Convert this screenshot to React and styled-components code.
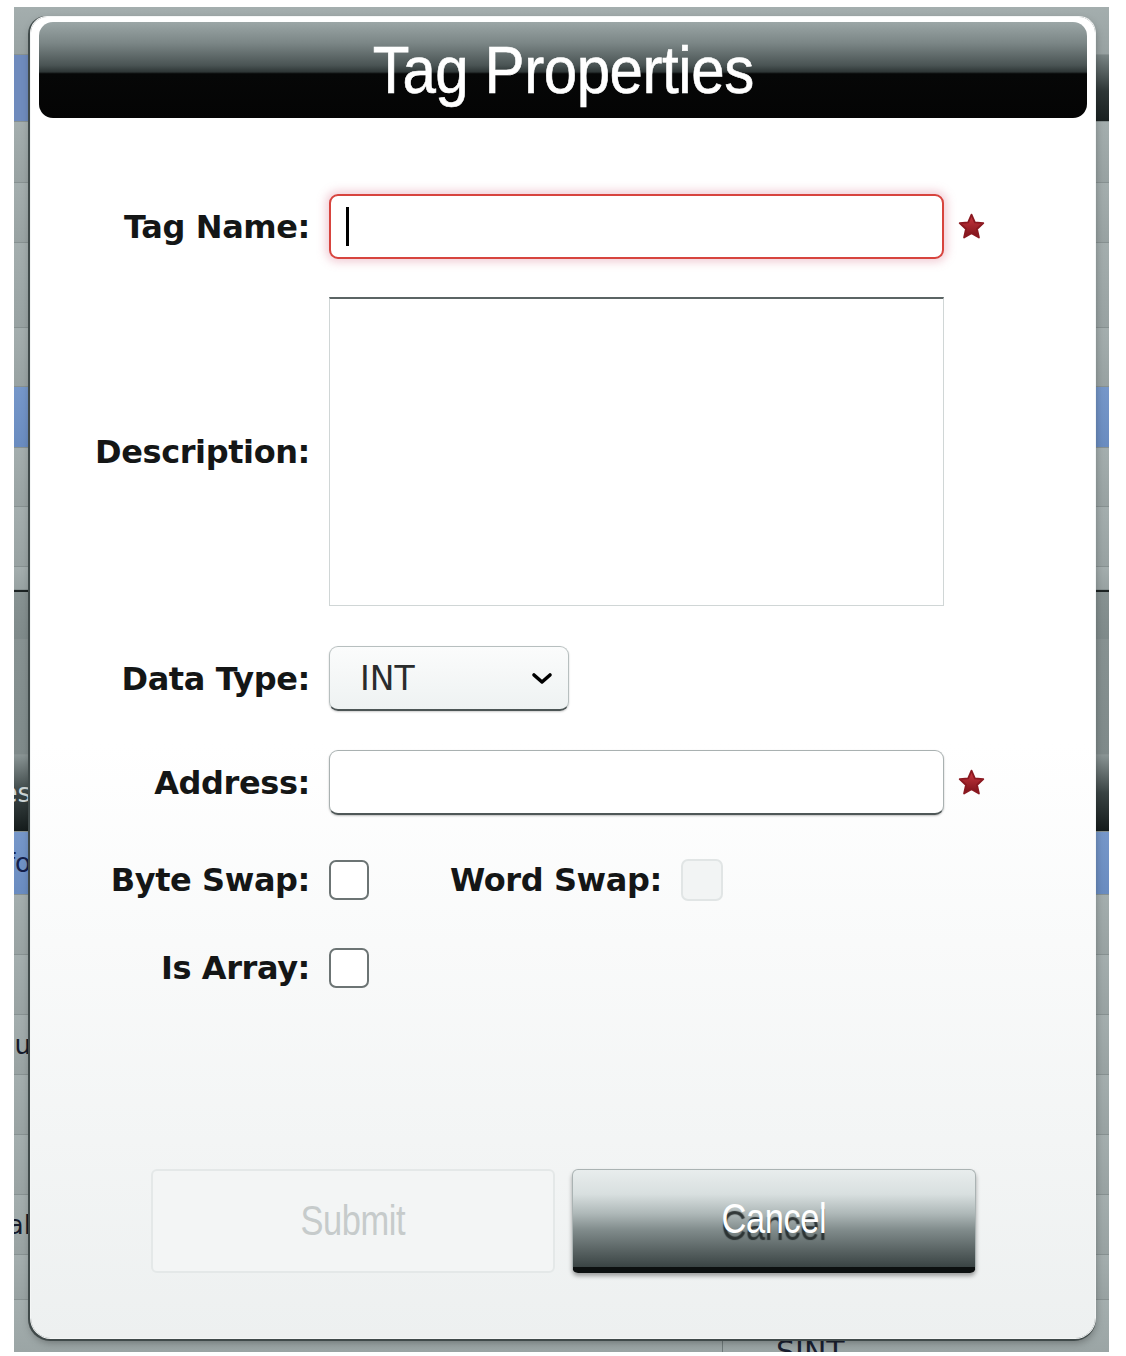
import React from 'react';
import styled, { createGlobalStyle } from 'styled-components';

const GlobalStyle = createGlobalStyle`
  html, body {
    margin: 0;
    padding: 0;
    background: #ffffff;
  }
  body {
    font-family: "DejaVu Sans", Verdana, sans-serif;
  }
`;

const tones = {
	plain: 'linear-gradient(#a4aeae, #98a2a2)',
	top: 'linear-gradient(90deg, #6f8bbd 0 50%, transparent 50%), linear-gradient(#7a8585, #2e3737 55%, #1a2121)',
	blue: 'linear-gradient(#7697c9, #6a8cc0)',
	dark: 'linear-gradient(#879292, #7f8a8a)',
	head: 'linear-gradient(#8a9595, #3a4444 50%, #151c1c)',
};

const Page = styled.div`
	width: 1126px;
	height: 1356px;
	padding: 7px 17px 4px 14px;
	box-sizing: border-box;
`;

const Backdrop = styled.div`
	position: relative;
	height: 100%;
	overflow: hidden;
	background: #98a2a2;
	display: flex;
	flex-direction: column;
`;

const BgRow = styled.div`
	flex: 0 0 ${(p) => p.$h}px;
	box-sizing: border-box;
	display: flex;
	align-items: center;
	background: ${(p) => tones[p.$tone || 'plain']};
	border-bottom: 1px solid #879191;
	border-top: ${(p) => (p.$rule ? '2px solid #1c2323' : 'none')};
`;

const BgLeft = styled.div`
	width: 17px;
	flex: none;
	overflow: hidden;
	display: flex;
	justify-content: flex-end;
	white-space: nowrap;
	font-size: 26px;
	color: ${(p) => p.$color || '#151a2a'};
`;

const BgCol = styled.div`
	margin-left: 691px;
	align-self: stretch;
	border-left: 1px solid #6f7a7a;
	padding: 34px 0 0 53px;
	font-size: 30px;
	color: #1a2030;
	white-space: nowrap;
`;

const Dialog = styled.div`
	position: absolute;
	left: 17px;
	top: 10px;
	width: 1064px;
	height: 1321px;
	box-sizing: border-box;
	padding: 5px 8px 0;
	background: linear-gradient(#ffffff 0%, #ffffff 55%, #edf0f0 100%);
	border-radius: 16px 16px 20px 20px;
	box-shadow: 0 0 0 1px #f4f6f6, -1px 1px 0 2px #404a4a, 0 4px 8px rgba(0, 0, 0, 0.35);
	display: flex;
	flex-direction: column;
`;

const Header = styled.div`
	height: 96px;
	flex: none;
	border-radius: 14px;
	background: linear-gradient(
		#9ba6a6 0%,
		#7b8686 22%,
		#4a5454 45%,
		#2e3636 52%,
		#060707 54%,
		#040404 100%
	);
	display: flex;
	justify-content: center;
	overflow: hidden;
`;

const Title = styled.h1`
	margin: 0;
	font: 400 66px/96px "Liberation Sans", Arial, sans-serif;
	color: #ffffff;
	transform: scaleX(0.91);
	letter-spacing: -0.5px;
	-webkit-text-stroke: 0.6px #ffffff;
`;

const Form = styled.div`
	display: flex;
	flex-direction: column;
	margin-top: 76px;
`;

const Row = styled.div`
	display: flex;
	align-items: center;
	height: ${(p) => p.$h}px;
	margin-top: ${(p) => p.$mt || 0}px;
`;

const Label = styled.label`
	width: 271px;
	flex: none;
	margin-right: 19px;
	text-align: right;
	font-size: 32px;
	font-weight: 700;
	color: #141616;
	letter-spacing: -0.4px;
	white-space: nowrap;
`;

const InlineLabel = styled(Label)`
	width: auto;
	margin-left: 81px;
`;

const FieldBox = styled.div`
	position: relative;
	display: flex;
`;

const Caret = styled.span`
	position: absolute;
	left: 17px;
	top: 13px;
	width: 3px;
	height: 39px;
	background: #000000;
	pointer-events: none;
`;

const TextInput = styled.input`
	width: 615px;
	height: 65px;
	box-sizing: border-box;
	padding: 0 15px;
	font-family: "DejaVu Sans", sans-serif;
	font-size: 33px;
	color: #111;
	caret-color: transparent;
	background: #ffffff;
	outline: none;
	border-radius: 9px;
	border: ${(p) => (p.$invalid ? '2px solid #d7443e' : '1px solid #a9b1b1')};
	border-bottom: ${(p) => (p.$invalid ? '2px solid #d7443e' : '2px solid #4f5858')};
	box-shadow: ${(p) =>
		p.$invalid
			? '0 0 10px 3px rgba(214, 110, 135, 0.35)'
			: '0 1px 2px rgba(0, 0, 0, 0.25)'};
`;

const TextArea = styled.textarea`
	width: 615px;
	height: 309px;
	box-sizing: border-box;
	resize: none;
	outline: none;
	border: 1px solid #d0d6d6;
	border-top: 2px solid #5b6464;
	background: #ffffff;
	font-family: "DejaVu Sans", sans-serif;
	font-size: 30px;
`;

const SelectBox = styled.div`
	position: relative;
	width: 240px;
	height: 65px;
`;

const Select = styled.select`
	appearance: none;
	width: 100%;
	height: 100%;
	box-sizing: border-box;
	padding: 0 0 0 30px;
	font-family: "DejaVu Sans", sans-serif;
	font-size: 33px;
	color: #2a2c2c;
	border: 1px solid #b7bfbf;
	border-bottom: 2px solid #4c5555;
	border-radius: 9px;
	background: linear-gradient(#fbfcfc, #eef2f2);
	box-shadow: 0 1px 2px rgba(0, 0, 0, 0.2);
	outline: none;
`;

const Chevron = styled.svg`
	position: absolute;
	right: 16px;
	top: 25px;
	pointer-events: none;
`;

const Star = styled.svg`
	margin-left: 14px;
	flex: none;
`;

const Check = styled.input.attrs({ type: 'checkbox' })`
	appearance: none;
	margin: 0;
	flex: none;
	width: ${(p) => (p.disabled ? 42 : 40)}px;
	height: ${(p) => (p.disabled ? 42 : 40)}px;
	box-sizing: border-box;
	border-radius: 7px;
	border: 2px solid ${(p) => (p.disabled ? '#e1e5e5' : '#6c7474')};
	background: ${(p) => (p.disabled ? '#f2f4f4' : '#ffffff')};
`;

const ButtonRow = styled.div`
	margin-top: auto;
	margin-bottom: 65px;
	display: flex;
	justify-content: center;
	gap: 17px;
`;

const Button = styled.button`
	width: 404px;
	height: 104px;
	box-sizing: border-box;
	border-radius: 6px;
	font-family: "Liberation Sans", Arial, sans-serif;
	font-size: 42px;
	padding: 0;
	${(p) =>
		p.$primary
			? `
		border: 1px solid #aab3b3;
		border-bottom: 6px solid #0c1010;
		color: #ffffff;
		text-shadow: 0 7px 1px rgba(35, 42, 42, 0.9);
		background: linear-gradient(#e8eded 0%, #d8dfdf 25%, #aeb8b8 45%, #808b8b 62%, #555f5f 85%, #3a4444 100%);
		box-shadow: 0 3px 4px rgba(0, 0, 0, 0.35);
	`
			: `
		border: 2px solid #e4e8e8;
		color: #c6cbcb;
		background: #f3f5f5;
	`}
`;

const ButtonText = styled.span`
	display: inline-block;
	transform: scaleX(0.82);
	letter-spacing: -0.5px;
`;

const bgRows = [
	{ h: 48 },
	{ h: 67, tone: 'top' },
	{ h: 61 },
	{ h: 60 },
	{ h: 85 },
	{ h: 59 },
	{ h: 61, tone: 'blue' },
	{ h: 59 },
	{ h: 60 },
	{ h: 23 },
	{ h: 50, tone: 'dark', rule: true },
	{ h: 115, tone: 'dark' },
	{ h: 77, tone: 'head', left: 'Types', color: '#cfd6d6' },
	{ h: 63, tone: 'blue', left: 'Info', color: '#14204a' },
	{ h: 60 },
	{ h: 60 },
	{ h: 60, left: 'Menu' },
	{ h: 60 },
	{ h: 60 },
	{ h: 60, left: 'Normal' },
	{ h: 45 },
	{ h: 70, col: 'SINT' },
];

const RequiredStar = () => (
	<Star width='27' height='27' viewBox='0 0 24 24'>
		<defs>
			<linearGradient id='starFill' x1='0' y1='0' x2='0' y2='1'>
				<stop offset='0' stopColor='#cc3840' />
				<stop offset='1' stopColor='#7a1219' />
			</linearGradient>
		</defs>
		<polygon
			points='12,1.5 15,8.4 22.5,9 16.9,14.2 18.6,21.8 12,17.9 5.4,21.8 7.1,14.2 1.5,9 9,8.4'
			fill='url(#starFill)'
			stroke='#8a1820'
			strokeWidth='1.6'
			strokeLinejoin='round'
		/>
	</Star>
);

const App = () => {
	return (
		<>
			<GlobalStyle />
			<Page>
				<Backdrop>
					{bgRows.map((r, i) => (
						<BgRow key={i} $h={r.h} $tone={r.tone} $rule={r.rule}>
							<BgLeft $color={r.color}>{r.left}</BgLeft>
							{r.col && <BgCol>{r.col}</BgCol>}
						</BgRow>
					))}

					<Dialog>
						<Header>
							<Title>Tag Properties</Title>
						</Header>

						<Form>
							<Row $h={65}>
								<Label>Tag Name:</Label>
								<FieldBox>
									<TextInput $invalid />
									<Caret />
								</FieldBox>
								<RequiredStar />
							</Row>
							<Row $h={309} $mt={38}>
								<Label>Description:</Label>
								<TextArea />
							</Row>
							<Row $h={65} $mt={40}>
								<Label>Data Type:</Label>
								<SelectBox>
									<Select defaultValue='INT'>
										<option>BOOL</option>
										<option>SINT</option>
										<option>INT</option>
										<option>DINT</option>
										<option>REAL</option>
									</Select>
									<Chevron width='22' height='15' viewBox='0 0 22 15'>
										<polyline
											points='3,4 11,11 19,4'
											fill='none'
											stroke='#000'
											strokeWidth='3.6'
											strokeLinecap='round'
											strokeLinejoin='round'
										/>
									</Chevron>
								</SelectBox>
							</Row>
							<Row $h={65} $mt={39}>
								<Label>Address:</Label>
								<TextInput />
								<RequiredStar />
							</Row>
							<Row $h={52} $mt={39}>
								<Label>Byte Swap:</Label>
								<Check />
								<InlineLabel>Word Swap:</InlineLabel>
								<Check disabled />
							</Row>
							<Row $h={52} $mt={36}>
								<Label>Is Array:</Label>
								<Check />
							</Row>
						</Form>

						<ButtonRow>
							<Button disabled>
								<ButtonText>Submit</ButtonText>
							</Button>
							<Button $primary>
								<ButtonText>Cancel</ButtonText>
							</Button>
						</ButtonRow>
					</Dialog>
				</Backdrop>
			</Page>
		</>
	);
};

export default App;
